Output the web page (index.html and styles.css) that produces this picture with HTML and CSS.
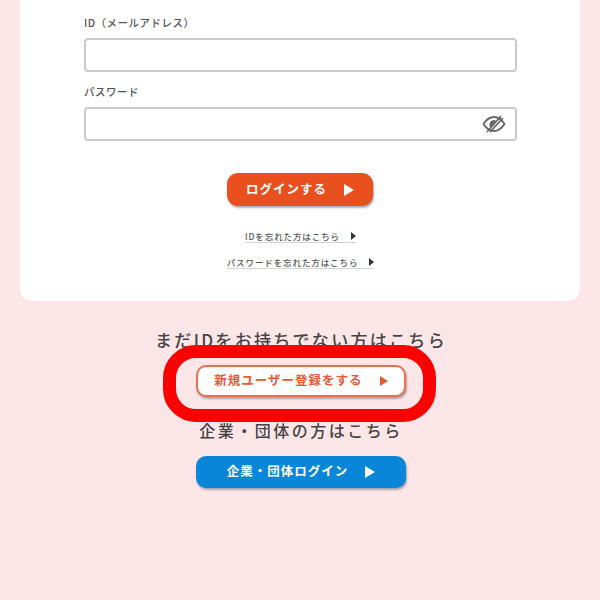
FILE: index.html
```html
<!DOCTYPE html>
<html lang="ja">
<head>
<meta charset="utf-8">
<title>ログイン</title>
<link rel="stylesheet" href="styles.css">
</head>
<body>
<main class="page">
  <section class="card">
    <form class="form">
      <label class="label">ID（メールアドレス）</label>
      <div class="field"></div>
      <label class="label label-pw">パスワード</label>
      <div class="field field-pw">
        <svg class="eye" viewBox="0 0 24 20" width="24" height="20" aria-hidden="true">
          <path d="M1.500 10C5 4.500 8.500 3 12 3s7 1.500 10.500 7C19 15.500 15.500 17 12 17S5 15.500 1.500 10Z" fill="none" stroke="#666" stroke-width="1.800"/>
          <path d="M7.500 10.500a4.500 4.500 0 0 1 6.500-4l-5.500 7.500a4.500 4.500 0 0 1-1-3.500Z" fill="#666"/>
          <path d="M5 18 19 2M8 18 21 4" fill="none" stroke="#666" stroke-width="1.800"/>
        </svg>
      </div>
      <button type="button" class="btn btn-login"><span class="btn-text">ログインする</span><span class="tri"></span></button>
      <a class="link link-id">IDを忘れた方はこちら<span class="tri-small"></span></a>
      <a class="link link-pw">パスワードを忘れた方はこちら<span class="tri-small"></span></a>
    </form>
  </section>
  <section class="lower">
    <p class="prompt">まだIDをお持ちでない方はこちら</p>
    <button type="button" class="btn btn-new"><span class="btn-text">新規ユーザー登録をする</span><span class="tri"></span></button>
    <p class="prompt prompt-corp">企業・団体の方はこちら</p>
    <button type="button" class="btn btn-corp"><span class="btn-text">企業・団体ログイン</span><span class="tri"></span></button>
  </section>
  <div class="highlight"></div>
</main>
</body>
</html>
```
FILE: styles.css
```css
* { box-sizing: border-box; }
html, body { margin: 0; height: 100%; }
body {
  background: #fde6e8;
  font-family: "Noto Sans CJK JP", "Noto Sans", sans-serif;
  overflow: hidden;
}
.page {
  position: relative;
  width: 600px;
  height: 600px;
  background: #fde6e8;
}
.card {
  margin: 0 20px;
  height: 301px;
  background: #fff;
  border-radius: 0 0 12px 12px;
  padding: 15px 63px 0 64px;
}
.form { display: flex; flex-direction: column; align-items: center; }
.label {
  align-self: flex-start;
  font-size: 10.500px;
  line-height: 16px;
  letter-spacing: 0.500px;
  color: #555;
  font-weight: 500;
}
.field {
  width: 100%;
  height: 34px;
  margin-top: 7px;
  background: #fff;
  border: 2px solid #cacaca;
  border-radius: 4px;
  display: flex;
  align-items: center;
  justify-content: flex-end;
  padding-right: 9px;
}
.label-pw { margin-top: 12px; }
.eye { display: block; }
.btn {
  display: flex;
  align-items: center;
  justify-content: center;
  border: 0;
  padding: 0;
  font-family: inherit;
  font-weight: 700;
  box-shadow: 1px 2px 2px rgba(70, 80, 100, 0.450);
}
.btn-text {
  letter-spacing: 1px;
  line-height: 16px;
  margin-top: -2px;
}
.tri {
  width: 0;
  height: 0;
  border-style: solid;
  border-width: 6px 0 6px 10px;
  border-color: transparent transparent transparent currentColor;
}
.btn-login {
  width: 146px;
  height: 33px;
  margin-top: 32px;
  margin-right: 1px;
  background: #ea4f1e;
  color: #fff;
  border-radius: 11px;
  font-size: 12.500px;
  gap: 17px;
}
.link {
  display: inline-flex;
  align-items: center;
  color: #555;
  font-size: 8.500px;
  line-height: 12px;
  letter-spacing: 0.900px;
  font-weight: 500;
  border-bottom: 1px solid #d4d4d4;
  gap: 11px;
}
.link-id { margin-top: 24px; }
.link-pw { margin-top: 13px; }
.tri-small {
  width: 0;
  height: 0;
  border-style: solid;
  border-width: 4px 0 4px 5px;
  border-color: transparent transparent transparent #333;
}
.lower {
  display: flex;
  flex-direction: column;
  align-items: center;
  padding-left: 2px;
}
.prompt {
  margin: 27px 0 0;
  font-size: 17px;
  line-height: 24px;
  letter-spacing: 2.300px;
  color: #444;
  font-weight: 500;
}
.prompt-corp {
  margin-top: 21px;
  font-size: 16px;
  letter-spacing: 2.500px;
}
.btn-new, .btn-corp {
  width: 210px;
  height: 32px;
  border-radius: 10px;
  font-size: 12.500px;
  gap: 17px;
}
.btn-new {
  margin-top: 13px;
  background: #fff;
  color: #e85a33;
  border: 2px solid #ec6f4d;
}
.btn-new .tri { border-width: 5px 0 5px 8px; }
.btn-corp {
  margin-top: 14px;
  background: #0a86d8;
  color: #fff;
}
.highlight {
  position: absolute;
  left: 163px;
  top: 345px;
  width: 273px;
  height: 77px;
  border: 13px solid #f00;
  border-radius: 33px;
  pointer-events: none;
}
```
